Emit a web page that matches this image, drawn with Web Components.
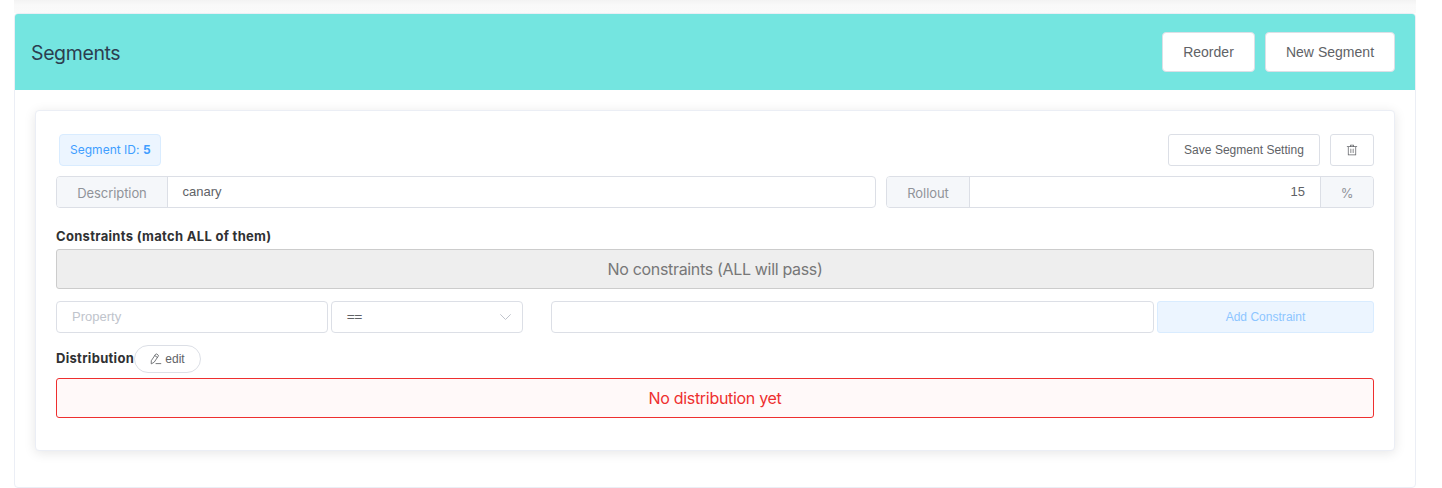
<!DOCTYPE html>
<html lang="en">
<head>
<meta charset="utf-8">
<title>Segments</title>
<style>
html,body{margin:0;height:488px;overflow:hidden;background:#fff}
body{font-family:Inter,"Liberation Sans",sans-serif;color:#2c3e50}
</style>
</head>
<body>
<segments-page></segments-page>
<script>
const define = (name, html) => {
  const template = document.createElement('template');
  template.innerHTML = html;
  customElements.define(name, class extends HTMLElement {
    constructor() {
      super();
      this.attachShadow({ mode: 'open' }).append(template.content.cloneNode(true));
    }
  });
};

define('ui-button', `<style>
:host{display:inline-flex;box-sizing:border-box;height:32px;align-items:center;justify-content:center;
  background:#fff;border:1px solid #dcdfe6;border-radius:3px;color:#606266;white-space:nowrap;
  font:12px/1 "Liberation Sans",Arial,sans-serif;letter-spacing:var(--track,.02px)}
:host([size=large]){height:40px;font-size:14px;border-radius:4px;--track:.02px}
:host([type=primary]){background:#ecf5ff;border-color:#d9ecff;color:#8cc5ff}
:host([round]){height:28px;border-radius:20px}
</style><slot></slot>`);

define('ui-icon-delete', `<style>:host{display:block;width:12px;height:12px}svg{display:block}</style>
<svg width="12" height="12" viewBox="0 0 1024 1024" fill="#606266"><path d="M160 256H96a32 32 0 010-64h256V95.936a32 32 0 0132-32h256a32 32 0 0132 32V192h256a32 32 0 110 64h-64v672a32 32 0 01-32 32H192a32 32 0 01-32-32V256zm448-64v-64H416v64h192zM224 896h576V256H224v640zm192-128a32 32 0 01-32-32V416a32 32 0 0164 0v320a32 32 0 01-32 32zm192 0a32 32 0 01-32-32V416a32 32 0 0164 0v320a32 32 0 01-32 32z"/></svg>`);

define('ui-icon-edit', `<style>:host{display:block;width:12px;height:12px}svg{display:block}</style>
<svg width="12" height="12" viewBox="0 0 12 12" fill="none" stroke="#606266" stroke-width=".85" stroke-linejoin="round" stroke-linecap="round"><path d="M1.5 7.4 5.6 1.3Q6.1.7 6.8 1.1L8.1 2Q8.7 2.4 8.3 3.1L4.2 9.2 1.6 10.7ZM4.8 2.6 7.4 4.4M6 10.6H10.8"/></svg>`);

define('ui-icon-arrow', `<style>:host{display:block;width:12px;height:12px}svg{display:block}</style>
<svg width="12" height="12" viewBox="0 0 12 12" fill="none" stroke="#c0c4cc" stroke-width="1" stroke-linecap="round" stroke-linejoin="round"><path d="M1.6 3.6 6.5 8.5 11.4 3.6"/></svg>`);

define('ui-tag', `<style>
:host{display:inline-flex;box-sizing:border-box;height:32px;align-items:center;padding:0 10px 2px;background:#ecf5ff;
  border:1px solid #d9ecff;border-radius:4px;color:#409eff;font-size:12px;white-space:pre;letter-spacing:.02px}
</style><slot></slot>`);

define('ui-field', `<style>
:host{display:flex;box-sizing:border-box;height:32px;border:1px solid #dcdfe6;border-radius:4px;background:#fff;
  overflow:hidden;font-size:13px;color:#606266}
.value{flex:1;display:flex;align-items:center;padding:0 15px 1px 14.5px;font-family:"Liberation Sans",Arial,sans-serif}
:host([align=end]) .value{justify-content:flex-end}
:host([placeholder]) .value{color:#c0c4cc;padding-left:15px}
:host([select]) .value{justify-content:space-between;padding-left:15px;padding-right:11px;-webkit-text-stroke:.3px #606266}
::slotted([slot]){display:flex;align-items:center;justify-content:center;background:#f5f7fa;color:#909399;
  box-sizing:border-box;flex:none;letter-spacing:-.08px;padding-top:1px}
::slotted([slot=prepend]){border-right:1px solid #dcdfe6}
::slotted([slot=append]){border-left:1px solid #dcdfe6}
</style><slot name="prepend"></slot><div class="value"><slot></slot></div><slot name="append"></slot>`);

define('ui-notice', `<style>
:host{display:flex;box-sizing:border-box;height:40px;align-items:center;justify-content:center;border:1px solid #ccc;
  border-radius:3px;background:#eee;color:#777;font-size:16px;letter-spacing:-.33px}
:host([type=error]){border-color:#ee2f2f;background:#fff9f9;color:#ee2f2f;letter-spacing:-.3px}
</style><slot></slot>`);

define('ui-card', `<style>
:host{display:block;box-sizing:border-box;background:#fff;border:1px solid #ebeef5;border-radius:4px}
:host([raised]){box-shadow:0 2px 12px 0 rgba(0,0,0,.1)}
header{display:flex;height:76px;box-sizing:border-box;align-items:center;justify-content:space-between;
  padding:0 20px 0 16px;background:#74e5e0;border-radius:3px 3px 0 0}
:host([raised]) header{display:none}
main{padding:20px}
:host([raised]) main{padding:23px 20px 0}
</style><header><slot name="title"></slot><slot name="actions"></slot></header><main><slot></slot></main>`);

define('segment-editor', `<style>
:host{display:block}
ui-card{height:341px}
.bar,.row,.actions,.distribution{display:flex}
.bar{justify-content:space-between;padding-left:3px;height:32px}
.actions{gap:10px}
.row{margin-top:10px;gap:10px}
h5{margin:0;font-size:13px;line-height:16px;font-weight:700;color:#303133;letter-spacing:.3px}
.constraints{margin:20px 0 5px}
.filters{display:grid;grid-template-columns:272px 192px 22px 603px 217px;column-gap:3px;margin-top:12px}
.distribution{margin:12px 0 5px;height:28px;align-items:center}
.distribution h5{width:78px;padding-bottom:2px}
.distribution ui-icon-edit{margin-right:3px}
</style>
<ui-card raised>
  <div class="bar">
    <ui-tag style="width:102px"><span>Segment ID: </span><b>5</b></ui-tag>
    <div class="actions"><ui-button style="width:152px">Save Segment Setting</ui-button><ui-button style="width:44px"><ui-icon-delete></ui-icon-delete></ui-button></div>
  </div>
  <div class="row">
    <ui-field style="width:820px"><span slot="prepend" style="width:111px">Description</span>canary</ui-field>
    <ui-field align="end" style="width:488px"><span slot="prepend" style="width:83px">Rollout</span>15<span slot="append" style="width:53px">%</span></ui-field>
  </div>
  <h5 class="constraints">Constraints (match ALL of them)</h5>
  <ui-notice>No constraints (ALL will pass)</ui-notice>
  <div class="filters">
    <ui-field placeholder>Property</ui-field>
    <ui-field select>==<ui-icon-arrow></ui-icon-arrow></ui-field>
    <span></span>
    <ui-field></ui-field>
    <ui-button type="primary">Add Constraint</ui-button>
  </div>
  <div class="distribution"><h5>Distribution</h5><ui-button round style="width:67px"><ui-icon-edit></ui-icon-edit>edit</ui-button></div>
  <ui-notice type="error">No distribution yet</ui-notice>
</ui-card>`);

define('segments-page', `<style>
:host{display:flex;flex-direction:column;height:488px;padding:0 26px 0 14px;box-sizing:border-box}
.gap{height:13px;flex:none;background:linear-gradient(#f3f3f3,#f9f9f9 5px,#fafafa)}
.panel{height:475px;box-sizing:border-box}
h2{margin:0;padding-top:2px;font-size:19.5px;font-weight:400;line-height:24px;color:#2c3e50;letter-spacing:-.38px}
.actions{display:flex;gap:10px}
</style>
<div class="gap"></div>
<ui-card class="panel">
  <h2 slot="title">Segments</h2>
  <div slot="actions" class="actions"><ui-button size="large" style="width:93px">Reorder</ui-button><ui-button size="large" style="width:130px">New Segment</ui-button></div>
  <segment-editor></segment-editor>
</ui-card>`);
</script>
</body>
</html>
